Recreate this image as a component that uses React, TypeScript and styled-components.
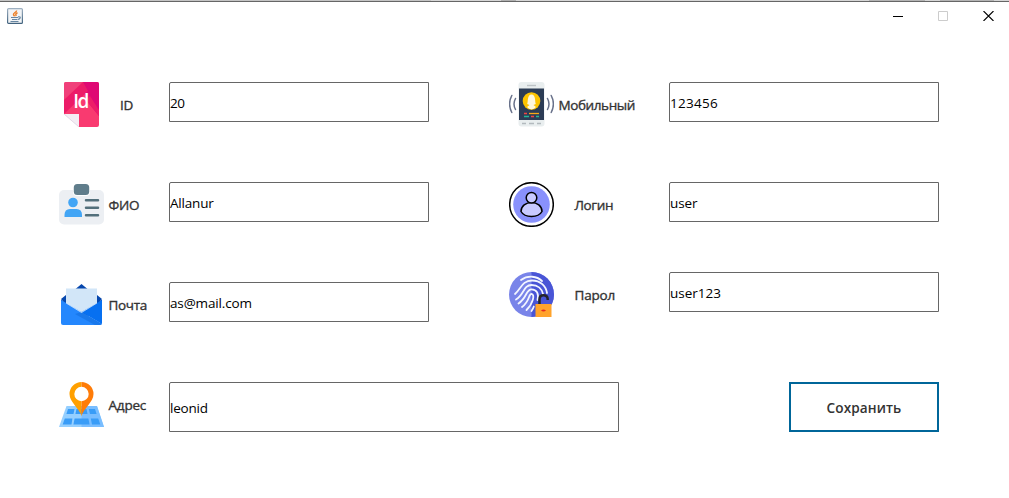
import React from "react";
import styled, { createGlobalStyle } from "styled-components";

const GlobalStyle = createGlobalStyle`
  * { box-sizing: border-box; }
  body { margin: 0; background: #fff; overflow: hidden; }
`;

const Window = styled.main`
  width: 1009px;
  height: 498px;
  display: flex;
  flex-direction: column;
  background: #fff;
  font-family: "Open Sans", "Noto Sans", sans-serif;
  color: #000;
`;

const TopEdge = styled.div`
  height: 2px;
  flex: none;
  border-bottom: 1px solid #666;
  background: linear-gradient(90deg, #c4c4c4 0 431px, #d6d6d6 431px 501px, #b0b0b0 501px 516px, #d6d6d6 516px 869px, #b4b4b4 869px 925px, #d6d6d6 925px 940px, #b4b4b4 940px 994px, #d6d6d6 994px);
`;

const TitleBar = styled.header`
  height: 30px;
  flex: none;
  display: flex;
  justify-content: space-between;
  padding: 6px 15px 0 7px;
`;

const WindowButtons = styled.div`
  display: flex;
  gap: 35px;
  padding-top: 3px;
`;

const Glyph = styled.svg`
  display: block;
  flex: none;
`;

const Form = styled.form`
  display: flex;
  flex-direction: column;
  gap: 55px;
  padding: 50px 70px 0 59px;
`;

const Columns = styled.div`
  display: flex;
  gap: 80px;
`;

const Column = styled.div<{ $gap: number }>`
  display: flex;
  flex-direction: column;
  gap: ${(p) => p.$gap}px;
`;

const Row = styled.label<{ $labelSpace: number }>`
  display: grid;
  grid-template-columns: 45px ${(p) => p.$labelSpace}px auto;
  align-items: start;
`;

const Caption = styled.span<{ $indent: number; $spacing: number }>`
  height: 45px;
  line-height: 46px;
  padding-left: ${(p) => p.$indent}px;
  font-size: 13.5px;
  font-weight: 500;
  letter-spacing: ${(p) => p.$spacing}px;
  white-space: nowrap;
  color: #333;
  -webkit-text-stroke: 0.35px #333;
`;

const Field = styled.input<{ $width: number; $tall?: boolean; $spacing?: number }>`
  width: ${(p) => p.$width}px;
  height: ${(p) => (p.$tall ? 50 : 40)}px;
  margin: 0;
  padding: 1px 0 0;
  border: 1px solid #666;
  border-top-left-radius: 2px;
  background: #fff;
  font-family: inherit;
  font-size: 13.5px;
  letter-spacing: ${(p) => p.$spacing ?? 0}px;
  color: #000;
  outline: none;
`;

const Footer = styled.div`
  display: flex;
  justify-content: space-between;
`;

const SaveButton = styled.button`
  width: 150px;
  height: 50px;
  padding: 1px 0 0;
  border: 2px solid #006699;
  background: #fff;
  font-family: inherit;
  font-size: 13.6px;
  font-weight: 600;
  letter-spacing: 0.1px;
  color: #333;
`;

const Icon = ({ children }: { children: React.ReactNode }) => (
  <Glyph width="45" height="45" viewBox="0 0 45 45" fill="none">{children}</Glyph>
);

const IdText = styled.text`
  font-family: "Open Sans", sans-serif;
  font-size: 19px;
  font-weight: 600;
  fill: #fff;
`;

const IdIcon = () => (
  <Icon>
    <path d="M7 0H38Q40 0 40 2V43Q40 45 38 45H20V32H5V2Q5 0 7 0Z" fill="#f93a70" />
    <path d="M5 2Q5 0 7 0H24L5 17Z" fill="#f0407a" />
    <path d="M24 0H38Q40 0 40 2V34L27 18Z" fill="#df0873" />
    <path d="M24 0L5 18V32L29 9Z" fill="#ec1b68" />
    <path d="M27 18L40 34V28L31 14Z" fill="#ed1d69" />
    <path d="M5 32H20V45Z" fill="#f4edf4" />
    <path d="M5 32L20 45" stroke="#d9cbdc" strokeWidth=".7" />
    <IdText x="14.3" y="26" textLength="16">Id</IdText>
  </Icon>
);

const CardIcon = () => (
  <Icon>
    <rect y="8" width="45" height="34.5" rx="5" fill="#eceff3" />
    <rect x="14" y="1" width="17" height="13" rx="4" fill="#fff" />
    <rect x="14.8" y="2" width="15.4" height="11" rx="3.5" fill="#607d8b" />
    <circle cx="14" cy="20.5" r="4.8" fill="#42a5f5" />
    <path d="M5.5 35V33Q5.5 27 11 27H17.5Q23 27 23 33V35Z" fill="#42a5f5" />
    <path d="M27 18.3H39M27 25.8H39M27 33.3H39" stroke="#526f7b" strokeWidth="2.5" strokeLinecap="round" />
  </Icon>
);

const MailIcon = () => (
  <Icon>
    <path d="M16.5 7L22.5 2L28.5 7ZM2 17L7 13V22ZM43 17L38 13V22Z" fill="#0647ad" />
    <path d="M2 17.5L22.5 31L43 17.5V26L22.5 37L2 26Z" fill="#0649ad" />
    <path d="M7 6.5H38V21L22.5 30.5L7 21Z" fill="#d2e6f8" />
    <path d="M2 18L43 42Q42 43 40 43H4Q2 43 2 41Z" fill="#2487fd" />
    <path d="M43 18L22.5 30L43 42Z" fill="#0770f1" />
    <path d="M22.5 30L43 42Q42 43 40 43H36L16 32Z" fill="#1978eb" />
    <path d="M7 21L22.5 30.5L38 21" stroke="#f2f9ff" strokeWidth=".7" />
  </Icon>
);

const MapIcon = () => (
  <Icon>
    <path d="M7.5 24H38L45 45H0Z" fill="#95cfff" />
    <path d="M22.5 24H38L45 45H22.5Z" fill="#79bdff" />
    <path d="M9 27H15.5L14.5 32H7.4ZM17.5 27H27.5L28.5 32H16.4ZM29.8 27H36L37.6 32H31ZM5.8 36.5H13.4L12.5 42.5H3.7ZM15.6 36.5H29.4L30.6 42.5H14.4ZM31.8 36.5H39.2L41.3 42.5H33Z" fill="#399cf7" />
    <path d="M22.5 0A12 12 0 0 0 10.5 12C10.5 20 20 26 22.5 34Z" fill="#ffa000" />
    <path d="M22.5 0A12 12 0 0 1 34.5 12C34.5 20 25 26 22.5 34Z" fill="#ff7c08" />
    <circle cx="22.5" cy="12" r="7.2" fill="#fff" />
  </Icon>
);

const PhoneIcon = () => (
  <Icon>
    <rect x="9.5" width="26" height="44.5" rx="3" fill="#e9eeef" />
    <rect x="10" y="6.5" width="25" height="31.5" fill="#2c3c55" />
    <path d="M18 3.5H27" stroke="#bdc3c6" strokeWidth="1.4" />
    <path d="M13 41.5H17M20 41.5H25M28 41.5H32" stroke="#b3babe" strokeWidth="1.3" />
    <circle cx="22.5" cy="19" r="8.8" fill="#fdc400" />
    <path d="M18.2 22C19.2 20 18 12.5 22.5 12.5S25.8 20 26.8 22L24.5 23L27 25Q25 27.4 22.5 27.4T18 25L20.5 23Z" fill="#fff8dd" />
    <path d="M20 31.5H30" stroke="#f8a916" strokeWidth="1.3" />
    <path d="M15 31.5H18M22 34.5H25" stroke="#ee4545" strokeWidth="1.3" />
    <path d="M15 34.5H20M27 34.5H30" stroke="#25b497" strokeWidth="1.3" />
    <path d="M6.5 16.5Q3.5 22 6.5 27.5M2.8 13.5Q-1.6 22 2.8 30.5M38.5 16.5Q41.5 22 38.5 27.5M42.2 13.5Q46.6 22 42.2 30.5" stroke="#68718a" strokeWidth="1.5" strokeLinecap="round" />
  </Icon>
);

const UserIcon = () => (
  <Icon>
    <circle cx="22.5" cy="22.5" r="21.8" fill="#fff" stroke="#000" strokeWidth="1.5" />
    <circle cx="22.5" cy="22.5" r="18.3" fill="#8991fc" />
    <path d="M12 29.5C12 24 17 20.5 22.5 20.5S33 24 33 29.5C31 33 27 34.5 22.5 34.5S14 33 12 29.5Z" fill="#c8caff" stroke="#000" strokeWidth="1.5" />
    <circle cx="22.5" cy="15.7" r="5.3" fill="#c8caff" stroke="#000" strokeWidth="1.5" />
  </Icon>
);

const FingerprintIcon = () => (
  <Icon>
    <circle cx="22.5" cy="22.5" r="22.5" fill="#7984e9" />
    <path d="M22.5 0A22.5 22.5 0 0 1 22.5 45Z" fill="#4955d6" />
    <g stroke="#f3f6ff" strokeWidth="1.8" strokeLinecap="round">
      <path d="M12 8C19 3 28 4 33 9" />
      <path d="M6 22C12 17 13 8.5 23 8.5C31.5 8.5 37 14 38 21" />
      <path d="M7 27.5C15 23 14.5 13 22.5 13C29 13 33 17 34 22" />
      <path d="M9.5 31.5C18 26 17 17.3 22.5 17.3C28 17.3 30 22 28.5 28" />
      <path d="M13 35C21 29 19.5 21.8 22.5 21.8C26 22 24.5 31 17.5 38" />
      <path d="M22.5 39Q24 37 24.8 34.5" />
    </g>
    <path d="M30.5 32V27.5Q30.5 23.3 34.5 23.3T38.7 27V28" stroke="#25252a" strokeWidth="2.5" />
    <rect x="26.5" y="32" width="16" height="13" fill="#ffa32c" />
    <path d="M32 38.5Q34.5 36.5 37 38.5Q34.5 40.5 32 38.5Z" fill="#e72c20" />
  </Icon>
);

const JavaIcon = () => (
  <Glyph width="16" height="16" viewBox="0 0 16 16" fill="none">
    <defs>
      <linearGradient id="java-frame" x2="0" y2="1">
        <stop stopColor="#9eb0c1" />
        <stop offset="1" stopColor="#42637f" />
      </linearGradient>
    </defs>
    <rect x=".6" y=".6" width="14.8" height="14.8" rx="1" fill="#f2f4f6" stroke="url(#java-frame)" strokeWidth="1.2" />
    <path d="M9.5 2.5C10 4 6 5 6.5 6.5Q6.7 7.5 7.7 8M10.5 4.8Q7.8 5.8 9.3 8" stroke="#ed8028" strokeWidth="1.5" />
    <path d="M4 9.5H11M5 11.5H10.5M3.5 13.5H11.5M11 8.8Q14 8.5 13 10.3Q12.5 11.2 11 11.3" stroke="#6786a2" strokeWidth="1.2" />
  </Glyph>
);

export default function App() {
  return (
    <Window>
      <GlobalStyle />
      <TopEdge />
      <TitleBar>
        <JavaIcon />
        <WindowButtons>
          <Glyph width="10" height="10" viewBox="0 0 10 10"><path d="M0 5.5H10" stroke="#000" /></Glyph>
          <Glyph width="10" height="10" viewBox="0 0 10 10"><path d="M.5 .5H9.5V9.5H.5Z" fill="none" stroke="#ccc" /></Glyph>
          <Glyph width="11" height="10" viewBox="0 0 11 10"><path d="M.5 0L10.5 10M10.5 0L.5 10" stroke="#000" strokeWidth="1.1" /></Glyph>
        </WindowButtons>
      </TitleBar>
      <Form>
        <Columns>
          <Column $gap={55}>
            <Row $labelSpace={65}><IdIcon /><Caption $indent={16} $spacing={-0.2}>ID</Caption><Field $width={260} $spacing={-0.4} defaultValue="20" /></Row>
            <Row $labelSpace={65}><CardIcon /><Caption $indent={4.5} $spacing={-0.3}>ФИО</Caption><Field $width={260} $spacing={-0.2} defaultValue="Allanur" /></Row>
            <Row $labelSpace={65}><MailIcon /><Caption $indent={4.5} $spacing={-0.3}>Почта</Caption><Field $width={260} $spacing={-0.15} defaultValue="as@mail.com" /></Row>
          </Column>
          <Column $gap={55}>
            <Row $labelSpace={115}><PhoneIcon /><Caption $indent={4.5} $spacing={-0.4}>Мобильный</Caption><Field $width={270} $spacing={0.3} defaultValue="123456" /></Row>
            <Column $gap={45}>
              <Row $labelSpace={115}><UserIcon /><Caption $indent={20.5} $spacing={-0.4}>Логин</Caption><Field $width={270} $spacing={-0.1} defaultValue="user" /></Row>
              <Row $labelSpace={115}><FingerprintIcon /><Caption $indent={20.5} $spacing={-0.2}>Парол</Caption><Field $width={270} defaultValue="user123" /></Row>
            </Column>
          </Column>
        </Columns>
        <Footer>
          <Row $labelSpace={65}><MapIcon /><Caption $indent={4.5} $spacing={-0.2}>Адрес</Caption><Field $width={450} $tall $spacing={-0.2} defaultValue="leonid" /></Row>
          <SaveButton type="button">Сохранить</SaveButton>
        </Footer>
      </Form>
    </Window>
  );
}
